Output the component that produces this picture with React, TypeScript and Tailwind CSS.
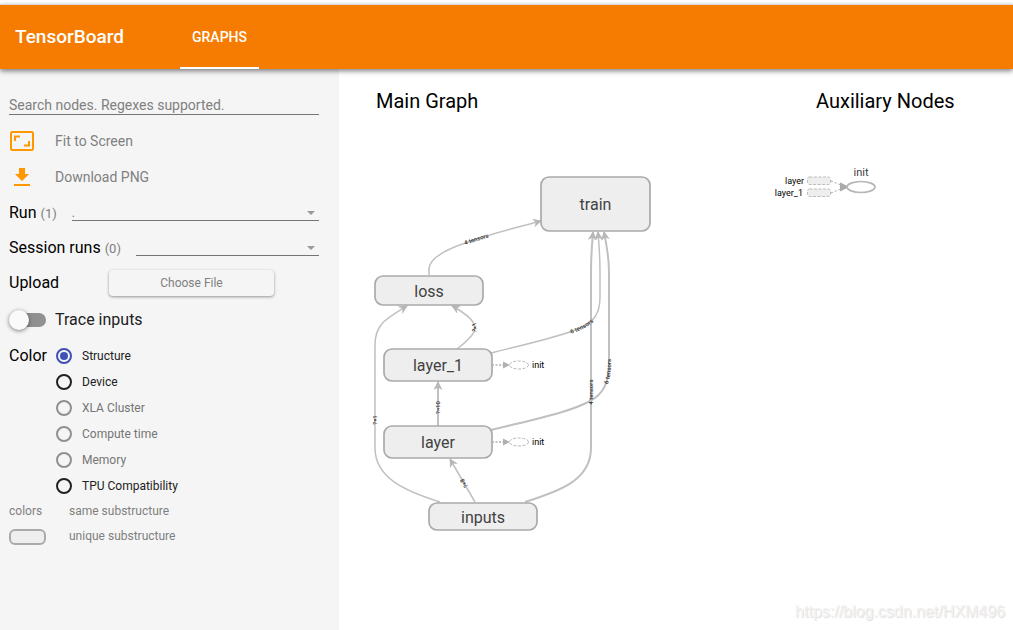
import { useState } from 'react'
import clsx from 'clsx'

const COLOR_OPTIONS = [
  { id: 'structure', label: 'Structure' },
  { id: 'device', label: 'Device' },
  { id: 'xla', label: 'XLA Cluster', disabled: true },
  { id: 'time', label: 'Compute time', disabled: true },
  { id: 'memory', label: 'Memory', disabled: true },
  { id: 'tpu', label: 'TPU Compatibility' },
]

const NODES = [
  { name: 'train', x: 541, y: 177, w: 109, h: 54 },
  { name: 'loss', x: 375, y: 276, w: 108, h: 29 },
  { name: 'layer_1', x: 384, y: 349, w: 108, h: 32 },
  { name: 'layer', x: 384, y: 426, w: 108, h: 32 },
  { name: 'inputs', x: 429, y: 503, w: 108, h: 27 },
]

// edges run from the lower node up to the node that consumes it
const EDGES = [
  { id: 'loss-train', d: 'M429 275V269C429 257 450 248 468 242C490 234 515 228 541 221', label: '4 tensors', at: '49%', width: 1.5 },
  { id: 'inputs-loss', d: 'M440 502C405 491 375 478 375 448V345C375 325 384 320 407 306', label: '?×1', at: '48%', width: 1.5 },
  { id: 'layer1-loss', d: 'M457 349C470 339 475 332 475 328C475 320 462 311 452 306', label: '?×1', at: '47%', width: 1.5 },
  { id: 'layer-layer1', d: 'M438 426V382', label: '?×10', at: '42%', width: 2 },
  { id: 'inputs-layer', d: 'M475 502L450 459', label: '?×8', at: '44%', width: 1.5 },
  { id: 'layer1-train', d: 'M491 353C530 343 560 337 580 328C593 322 600 315 600 297V272C600 255 599 245 598 232', label: '6 tensors', at: '48%', width: 1.5 },
  { id: 'layer-train', d: 'M491 430C540 418 570 412 590 401C604 394 609 380 609 365V272C609 255 606 243 604 232', label: '6 tensors', at: '50%', width: 2 },
  { id: 'inputs-train', d: 'M525 502C560 491 591 480 591 448V272C591 255 592 245 593 232', label: '4 tensors', at: '48%', width: 2 },
]

function Header() {
  return (
    <header className="relative z-10 mt-1 flex h-[65px] shrink-0 items-stretch border-t border-[#dadada] bg-[#f57c00] text-white shadow-[0_2px_5px_rgba(0,0,0,0.5)]">
      <h1 className="w-[180px] pl-[15px] text-[19px] leading-[64px] font-medium">TensorBoard</h1>
      <nav className="flex">
        <button className="border-b-2 border-white px-3 pt-0.5 text-sm font-medium">GRAPHS</button>
      </nav>
    </header>
  )
}

function FitIcon() {
  return (
    <svg viewBox="0 0 24 20" className="h-5 w-6" fill="none" stroke="#ff9800">
      <rect x="1" y="1" width="22" height="18" rx="1.500" strokeWidth="2" />
      <path d="M5 10V5.500H10M19 10V14.500H14" strokeWidth="2" />
    </svg>
  )
}

function DownloadIcon() {
  return (
    <svg viewBox="0 0 24 20" className="h-5 w-6" fill="#ff9800">
      <path d="M9 1h6v6h4l-7 7-7-7h4zM4 17h16v2H4z" />
    </svg>
  )
}

function SelectRow({ id, label, count, value }: { id: string; label: string; count: number; value: string }) {
  return (
    <div className="flex h-[35px] items-center">
      <label htmlFor={id} className="shrink-0 text-base text-black">
        {label} <span className="text-[13px] text-[#808080]">({count})</span>
      </label>
      <div className="relative ml-[15px] flex-1">
        <select
          id={id}
          className="block h-4 w-full appearance-none border-b border-[#757575] bg-transparent text-xs text-[#757575] outline-none"
        >
          <option>{value}</option>
        </select>
        <svg viewBox="0 0 8 4" className="pointer-events-none absolute top-1.5 right-1 h-1 w-2" fill="#999">
          <path d="M0 0h8L4 4z" />
        </svg>
      </div>
    </div>
  )
}

function Sidebar() {
  const [color, setColor] = useState('structure')
  const [trace, setTrace] = useState(false)

  return (
    <aside className="w-[339px] shrink-0 bg-[#f5f5f5] pt-[25px] pr-5 pl-[9px] text-[#808080]">
      <input
        type="text"
        aria-label="Search nodes"
        placeholder="Search nodes. Regexes supported."
        className="block h-[21px] w-full border-b border-[#757575] bg-transparent pt-0.5 text-sm outline-none placeholder:text-[#808080]"
      />
      <div className="mt-2 pl-px">
        <button className="flex h-9 items-center gap-[21px] text-sm">
          <FitIcon />
          Fit to Screen
        </button>
        <button className="flex h-9 items-center gap-[21px] text-sm">
          <DownloadIcon />
          Download PNG
        </button>
      </div>
      <SelectRow id="run" label="Run" count={1} value="." />
      <SelectRow id="session" label="Session runs" count={0} value="" />
      <div className="flex h-[35px] items-center">
        <span className="w-[100px] text-base text-black">Upload</span>
        <button className="h-[26px] w-[165px] rounded-sm text-xs shadow-[0_1px_3px_rgba(0,0,0,0.4)]">Choose File</button>
      </div>
      <label className="flex h-10 items-center text-base text-[#212121]">
        <input
          type="checkbox"
          checked={trace}
          onChange={e => setTrace(e.target.checked)}
          className="sr-only"
        />
        <span className="relative mr-[9px] flex h-[22px] w-[37px] items-center before:ml-1 before:h-3.5 before:w-full before:rounded-full before:bg-[#919191]">
          <span
            className={clsx(
              'absolute left-0 size-5 rounded-full shadow-[0_1px_4px_rgba(0,0,0,0.5)]',
              trace ? 'translate-x-4 bg-[#3f51b5]' : 'bg-[#fafafa]'
            )}
          />
        </span>
        Trace inputs
      </label>
      <fieldset className="mt-[3px] flex">
        <legend className="float-left w-[47px] text-base leading-[26px] text-black">Color</legend>
        <div>
          {COLOR_OPTIONS.map(option => (
            <label
              key={option.id}
              className={clsx(
                'flex h-[26px] items-center gap-2.5 text-xs',
                option.disabled ? 'text-[#757575]' : 'text-[#212121]'
              )}
            >
              <input
                type="radio"
                name="color"
                value={option.id}
                disabled={option.disabled}
                checked={color === option.id}
                onChange={() => setColor(option.id)}
                className="flex size-4 appearance-none items-center justify-center rounded-full border-2 border-[#212121] checked:border-[#3f51b5] checked:before:size-2 checked:before:rounded-full checked:before:bg-[#3f51b5] disabled:border-[#909090]"
              />
              {option.label}
            </label>
          ))}
        </div>
      </fieldset>
      <div className="grid grid-cols-[60px_1fr] items-center text-xs leading-[25px]">
        <span>colors</span>
        <span>same substructure</span>
        <span className="h-4 w-[37px] rounded-md border-2 border-[#aaa] bg-[#eee]" />
        <span>unique substructure</span>
      </div>
    </aside>
  )
}

function InitRef({ x, y }: { x: number; y: number }) {
  return (
    <g>
      <path d={`M${x} ${y}h11`} stroke="#b0b0b0" strokeWidth="1.500" strokeDasharray="2 1.500" />
      <path d={`M${x + 11} ${y - 3.5}v7l7-3.500z`} fill="#b0b0b0" />
      <ellipse cx={x + 27} cy={y} rx="9.500" ry="4" fill="#fff" stroke="#b7b7b7" strokeDasharray="3 1.500" />
      <text x={x + 40} y={y + 3} fontSize="9" className="fill-black">init</text>
    </g>
  )
}

function MainGraph() {
  return (
    <svg viewBox="370 120 300 430" className="h-[430px] w-[300px]" role="img" aria-label="Main graph">
      <defs>
        <marker id="arrow" viewBox="0 0 10 10" refX="9" refY="5" markerWidth="9" markerHeight="9" markerUnits="userSpaceOnUse" orient="auto">
          <path d="M0 0L10 5L0 10L3 5z" fill="#b7b7b7" />
        </marker>
      </defs>
      {EDGES.map(edge => (
        <path key={edge.id} id={edge.id} d={edge.d} fill="none" stroke="#c0c0c0" strokeWidth={edge.width} markerEnd="url(#arrow)" />
      ))}
      {EDGES.map(edge => (
        <text key={edge.id} dy="2" fontSize="6" textAnchor="middle" className="fill-[#333] font-medium">
          <textPath href={`#${edge.id}`} startOffset={edge.at}>{edge.label}</textPath>
        </text>
      ))}
      {NODES.map(node => (
        <g key={node.name}>
          <rect x={node.x} y={node.y} width={node.w} height={node.h} rx="8" fill="#eee" stroke="#aaa" strokeWidth="1.700" />
          <text x={node.x + node.w / 2} y={node.y + node.h / 2 + 6} fontSize="16" textAnchor="middle" className="fill-[#424242]">
            {node.name}
          </text>
        </g>
      ))}
      <InitRef x={492} y={365} />
      <InitRef x={492} y={442} />
    </svg>
  )
}

function AuxGraph() {
  return (
    <svg viewBox="772 120 110 90" className="h-[90px] w-[110px]" role="img" aria-label="Auxiliary nodes">
      <g fill="#eee" stroke="#bbb" strokeDasharray="3 1.500">
        <rect x="807.500" y="177" width="23" height="7.500" rx="2" />
        <rect x="807.500" y="189" width="23" height="7.500" rx="2" />
      </g>
      <path d="M831 181L841 185M831 193L841 189" stroke="#aaa" strokeDasharray="2 2" />
      <path d="M841 184L847 187L841 190z" fill="#aaa" stroke="#aaa" strokeWidth="2" />
      <ellipse cx="861" cy="187" rx="14" ry="5.500" fill="#fff" stroke="#b7b7b7" strokeWidth="1.700" />
      <text x="861" y="176" fontSize="11" textAnchor="middle" className="fill-[#424242]">init</text>
      <text x="804" y="184" fontSize="9" textAnchor="end">layer</text>
      <text x="803" y="196" fontSize="9" textAnchor="end">layer_1</text>
    </svg>
  )
}

export default function App() {
  return (
    <div className="flex min-h-screen flex-col bg-white font-['Roboto',sans-serif]">
      <Header />
      <div className="flex flex-1">
        <Sidebar />
        <main className="flex flex-1 flex-col justify-between">
          <div className="flex justify-between">
            <section className="pl-[31px]">
              <h2 className="mt-[18px] h-[33px] pl-1.5 text-xl">Main Graph</h2>
              <MainGraph />
            </section>
            <section className="w-[241px]">
              <h2 className="mt-[18px] h-[33px] pl-11 text-xl">Auxiliary Nodes</h2>
              <AuxGraph />
            </section>
          </div>
          <footer className="pr-2 pb-2 text-right font-['Liberation_Sans',sans-serif] text-base leading-5 text-[#f2f2f2] [text-shadow:1px_1px_1px_#ddd]">
            https://blog.csdn.net/HXM496
          </footer>
        </main>
      </div>
    </div>
  )
}
